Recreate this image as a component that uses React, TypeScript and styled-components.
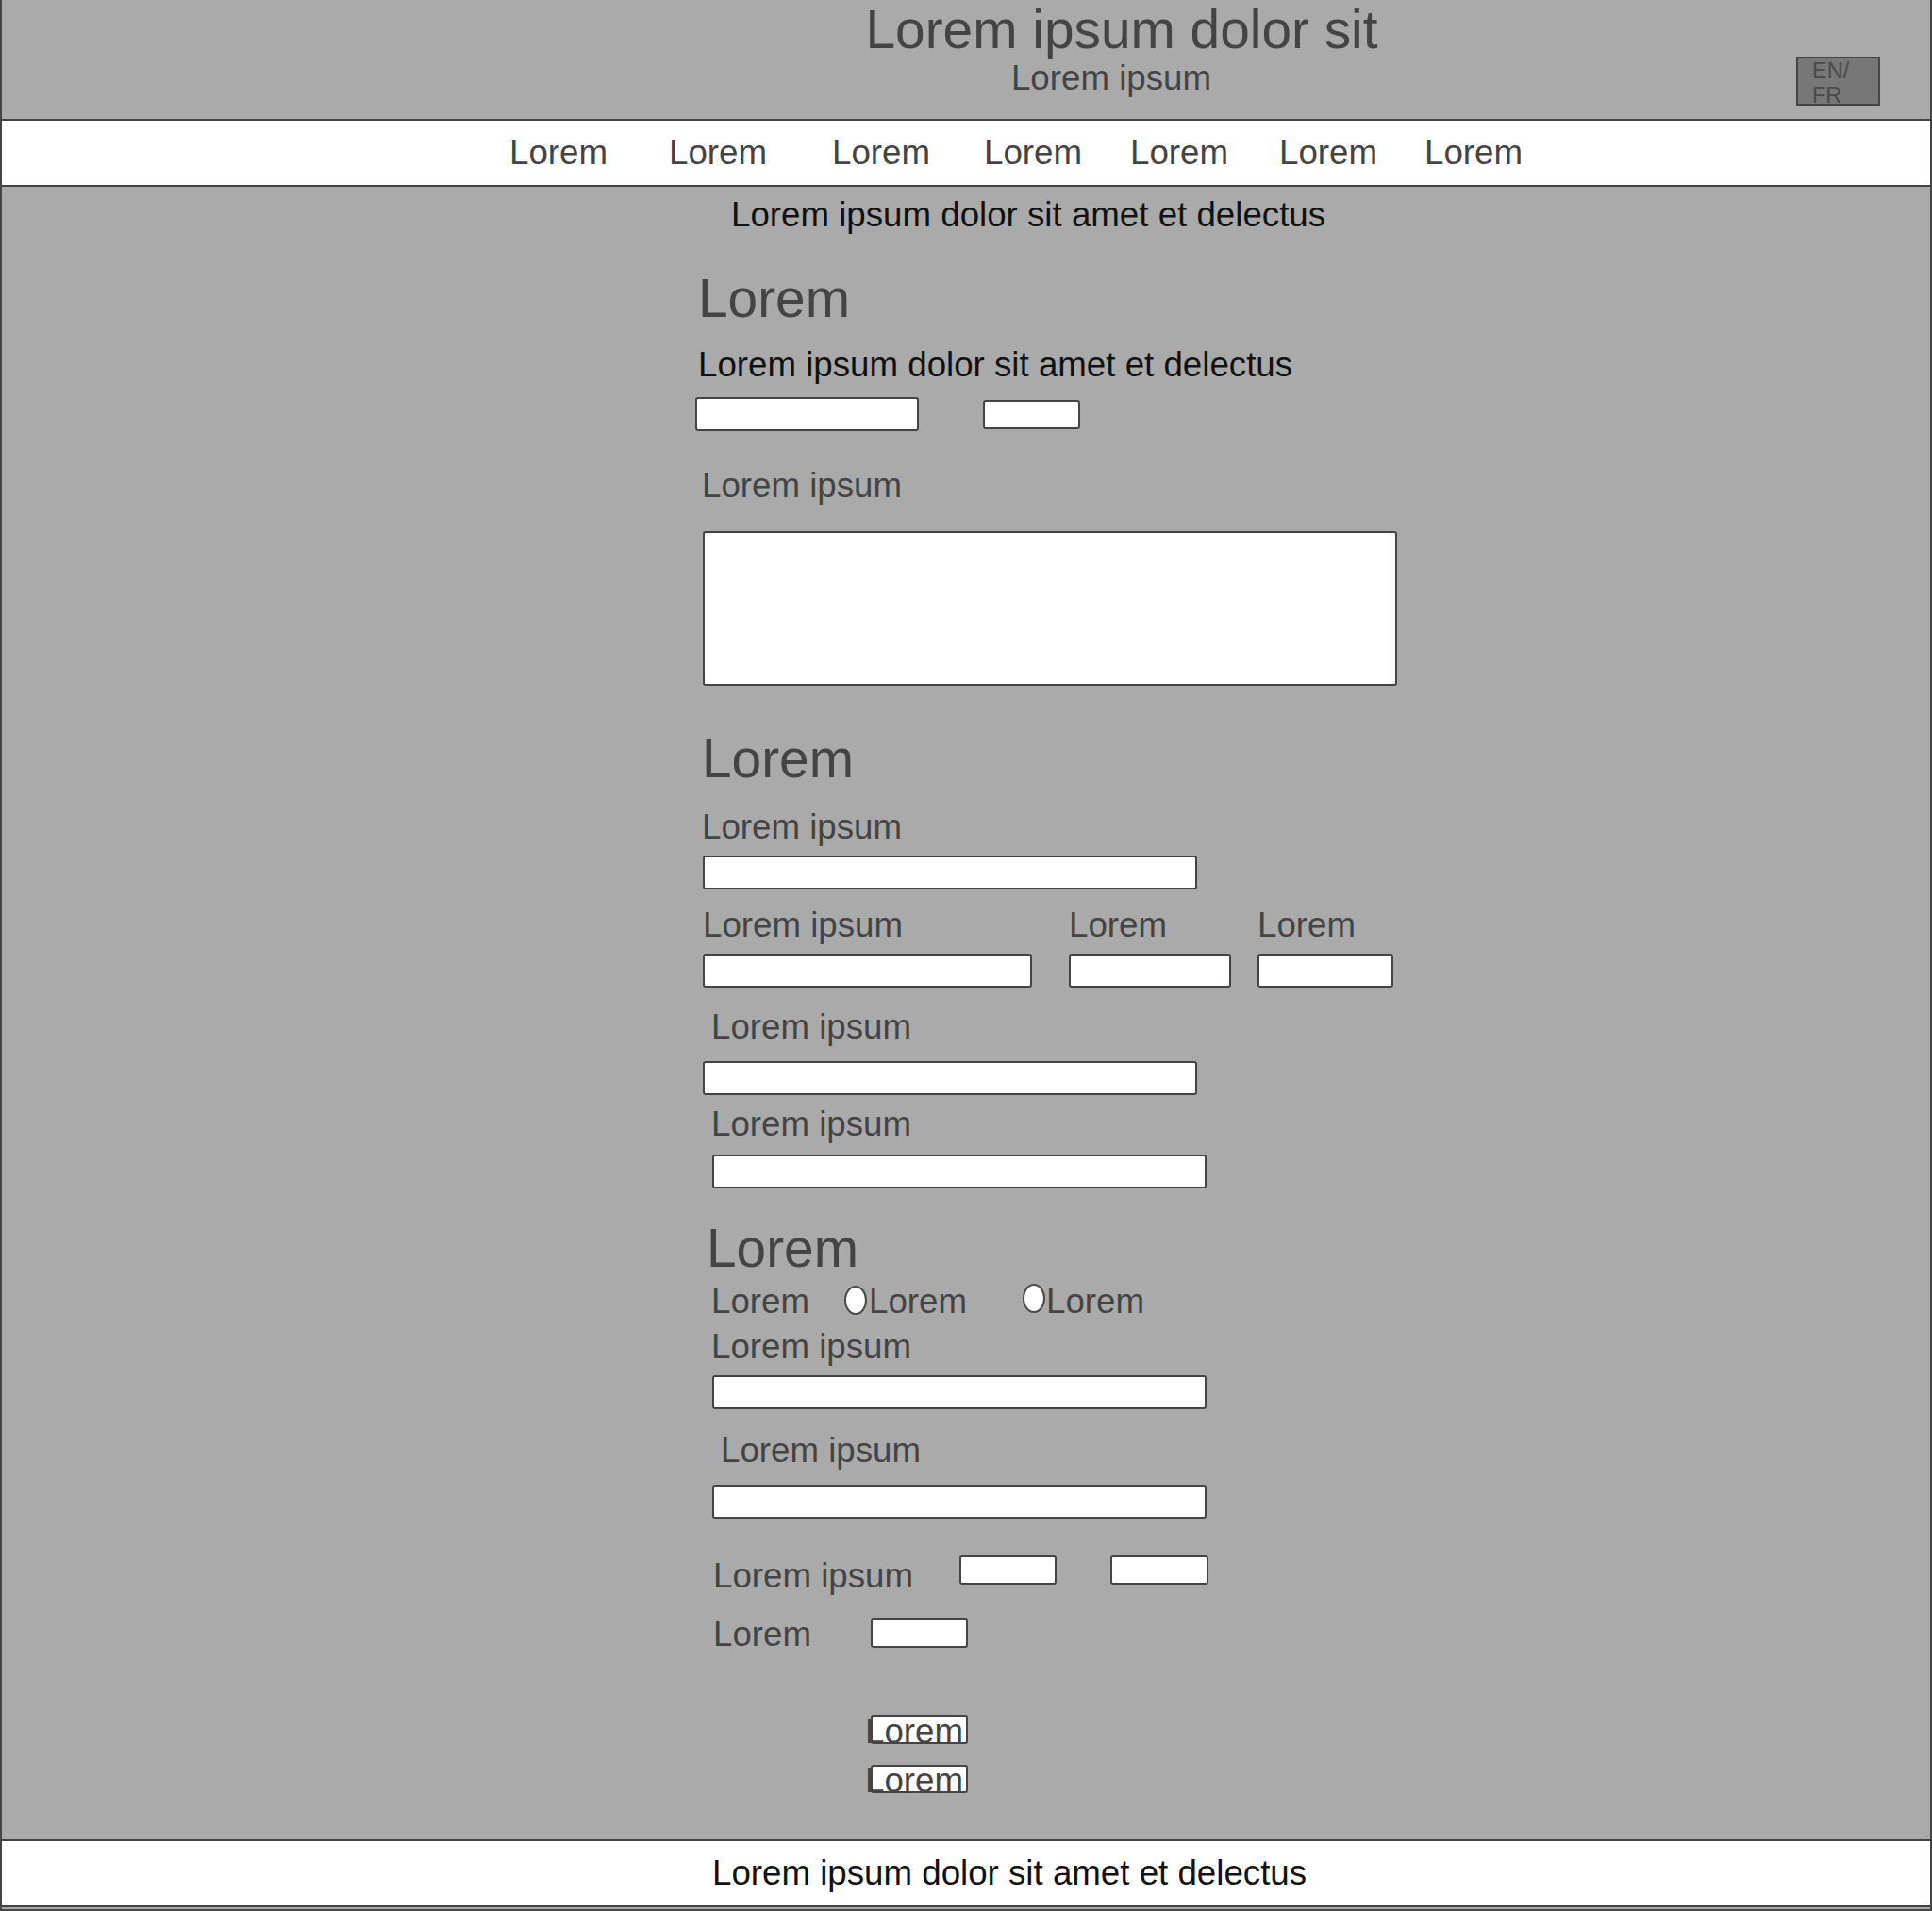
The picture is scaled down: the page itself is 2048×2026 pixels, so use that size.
import React from 'react';
import styled, { createGlobalStyle } from 'styled-components';

const GlobalStyle = createGlobalStyle`
  html, body {
    margin: 0;
    padding: 0;
    background: #aaaaaa;
  }

  body {
    font-family: 'Liberation Sans', Arial, sans-serif;
    color: #444;
  }

  * {
    box-sizing: border-box;
  }
`;

// body copy in the wireframe runs a touch over 36px
const TEXT = '36.7px';
const BIG = '56.8px';

const Page = styled.div`
  width: 2048px;
  border-left: 2px solid #444;
  border-right: 2px solid #444;
  background: #aaaaaa;
`;

const Header = styled.header`
  display: flex;
  align-items: flex-start;
  height: 128px;
  padding-left: 472px;
  border-bottom: 2px solid #444;
`;

const TitleBlock = styled.div`
  flex: 1;
  display: flex;
  flex-direction: column;
  align-items: center;
`;

const Title = styled.h1`
  margin: 0;
  font-size: ${BIG};
  line-height: 63px;
  font-weight: 400;
  color: #444;
  white-space: nowrap;
`;

const Subtitle = styled.div`
  padding-right: 22px;
  font-size: ${TEXT};
  line-height: 40px;
  color: #444;
`;

const LangToggle = styled.button`
  width: 89px;
  height: 52px;
  margin: 60px 53px 0 0;
  padding: 0 0 0 15px;
  border: 2px solid #444;
  background: #777;
  color: #4a4a4a;
  font-family: inherit;
  font-size: 23.5px;
  line-height: 26px;
  text-align: left;
  overflow: hidden;
  display: block;
`;

const Nav = styled.nav`
  display: flex;
  align-items: flex-start;
  height: 70px;
  padding: 14px 0 0 0;
  background: #fff;
  border-bottom: 2px solid #444;
`;

const NavItem = styled.a<{ $ml: number }>`
  margin-left: ${({ $ml }) => $ml}px;
  font-size: ${TEXT};
  line-height: 40px;
  color: #444;
  text-decoration: none;
  white-space: nowrap;
`;

const Main = styled.main`
  display: flex;
  flex-direction: column;
  align-items: flex-start;
  padding: 10px 0 49px 737px;
`;

const Intro = styled.p<{ $ml: number }>`
  margin: 0 0 0 ${({ $ml }) => $ml}px;
  font-size: ${TEXT};
  line-height: 40px;
  color: #111;
  white-space: nowrap;
`;

const SectionTitle = styled.h2<{ $mt: number; $ml: number }>`
  margin: ${({ $mt }) => $mt}px 0 0 ${({ $ml }) => $ml}px;
  font-size: ${BIG};
  line-height: 64px;
  font-weight: 400;
  color: #444;
`;

const Lead = styled.p<{ $mt: number; $ml: number }>`
  margin: ${({ $mt }) => $mt}px 0 0 ${({ $ml }) => $ml}px;
  font-size: ${TEXT};
  line-height: 40px;
  color: #111;
  white-space: nowrap;
`;

const Label = styled.label<{ $mt?: number; $ml?: number }>`
  display: block;
  margin: ${({ $mt = 0 }) => $mt}px 0 0 ${({ $ml = 0 }) => $ml}px;
  font-size: ${TEXT};
  line-height: 40px;
  color: #444;
  white-space: nowrap;
`;

const Field = styled.input<{ $mt?: number; $ml?: number; $w: number; $h?: number }>`
  display: block;
  flex: none;
  width: ${({ $w }) => $w}px;
  height: ${({ $h = 36 }) => $h}px;
  margin: ${({ $mt = 0 }) => $mt}px 0 0 ${({ $ml = 0 }) => $ml}px;
  padding: 0;
  border: 2px solid #444;
  border-radius: 3px;
  background: #fff;
  outline: none;
`;

const TextBox = styled.textarea<{ $mt: number; $ml: number }>`
  display: block;
  width: 736px;
  height: 164px;
  margin: ${({ $mt }) => $mt}px 0 0 ${({ $ml }) => $ml}px;
  padding: 0;
  border: 2px solid #444;
  border-radius: 3px;
  background: #fff;
  resize: none;
  outline: none;
`;

const Row = styled.div<{ $mt: number; $ml: number; $align?: string }>`
  display: flex;
  align-items: ${({ $align = 'flex-start' }) => $align};
  margin: ${({ $mt }) => $mt}px 0 0 ${({ $ml }) => $ml}px;
`;

const Column = styled.div<{ $ml?: number }>`
  display: flex;
  flex-direction: column;
  margin-left: ${({ $ml = 0 }) => $ml}px;
`;

const Radio = styled.span<{ $mt: number; $ml: number }>`
  display: block;
  flex: none;
  width: 24px;
  height: 31px;
  margin: ${({ $mt }) => $mt}px 0 0 ${({ $ml }) => $ml}px;
  border: 2px solid #4a4a4a;
  border-radius: 50%;
  background: #fff;
`;

const Button = styled.button<{ $mt: number; $h: number }>`
  display: block;
  width: 103px;
  height: ${({ $h }) => $h}px;
  margin: ${({ $mt }) => $mt}px 0 0 184px;
  padding: 0;
  border: 2px solid #444;
  border-radius: 3px;
  background: #fff;
  color: #444;
  font-family: inherit;
  font-size: ${TEXT};
  line-height: ${({ $h }) => $h}px;
  text-align: left;
  text-indent: -8px;
  white-space: nowrap;
  overflow: visible;
`;

const Footer = styled.footer`
  height: 72px;
  padding: 14px 0 0 753px;
  background: #fff;
  border-top: 2px solid #444;
  border-bottom: 2px solid #444;
  font-size: ${TEXT};
  line-height: 40px;
  color: #111;
`;

const FooterEdge = styled.div`
  height: 4px;
  border-bottom: 2px solid #444;
`;

const navItems = [
  { label: 'Lorem', ml: 538 },
  { label: 'Lorem', ml: 65 },
  { label: 'Lorem', ml: 69 },
  { label: 'Lorem', ml: 57 },
  { label: 'Lorem', ml: 51 },
  { label: 'Lorem', ml: 54 },
  { label: 'Lorem', ml: 50 },
];

export default function App() {
  return (
    <>
      <GlobalStyle />
      <Page>
        <Header>
          <TitleBlock>
            <Title>Lorem ipsum dolor sit</Title>
            <Subtitle>Lorem ipsum</Subtitle>
          </TitleBlock>
          <LangToggle>
            EN/
            <br />
            FR
          </LangToggle>
        </Header>

        <Nav>
          {navItems.map((item, i) => (
            <NavItem key={i} $ml={item.ml} href="#">
              {item.label}
            </NavItem>
          ))}
        </Nav>

        <Main>
          <Intro $ml={36}>Lorem ipsum dolor sit amet et delectus</Intro>

          <SectionTitle $mt={37} $ml={1}>Lorem</SectionTitle>
          <Lead $mt={18} $ml={1}>Lorem ipsum dolor sit amet et delectus</Lead>
          <Row $mt={14} $ml={-2} $align="center">
            <Field $w={237} $h={36} />
            <Field $w={103} $h={31} $ml={68} />
          </Row>
          <Label $mt={38} $ml={5}>Lorem ipsum</Label>
          <TextBox $mt={28} $ml={6} />

          <SectionTitle $mt={46} $ml={5}>Lorem</SectionTitle>
          <Label $mt={20} $ml={5}>Lorem ipsum</Label>
          <Field $mt={10} $ml={6} $w={524} />
          <Row $mt={18} $ml={6}>
            <Column>
              <Label>Lorem ipsum</Label>
              <Field $mt={10} $w={349} />
            </Column>
            <Column $ml={39}>
              <Label>Lorem</Label>
              <Field $mt={10} $w={172} />
            </Column>
            <Column $ml={28}>
              <Label>Lorem</Label>
              <Field $mt={10} $w={144} />
            </Column>
          </Row>
          <Label $mt={22} $ml={15}>Lorem ipsum</Label>
          <Field $mt={16} $ml={6} $w={524} />
          <Label $mt={11} $ml={15}>Lorem ipsum</Label>
          <Field $mt={12} $ml={16} $w={524} />

          <SectionTitle $mt={32} $ml={10}>Lorem</SectionTitle>
          <Row $mt={4} $ml={15}>
            <Label>Lorem</Label>
            <Radio $mt={3} $ml={37} />
            <Label $ml={2}>Lorem</Label>
            <Radio $mt={1} $ml={59} />
            <Label $ml={1}>Lorem</Label>
          </Row>
          <Label $mt={8} $ml={15}>Lorem ipsum</Label>
          <Field $mt={10} $ml={16} $w={524} />
          <Label $mt={24} $ml={25}>Lorem ipsum</Label>
          <Field $mt={16} $ml={16} $w={524} />

          <Row $mt={39} $ml={17}>
            <Label $mt={2}>Lorem ipsum</Label>
            <Field $ml={49} $w={103} $h={31} />
            <Field $ml={57} $w={104} $h={31} />
          </Row>
          <Row $mt={22} $ml={17}>
            <Label>Lorem</Label>
            <Field $mt={2} $ml={63} $w={103} $h={32} />
          </Row>

          <Button $mt={65} $h={31}>Lorem</Button>
          <Button $mt={22} $h={30}>Lorem</Button>
        </Main>

        <Footer>Lorem ipsum dolor sit amet et delectus</Footer>
        <FooterEdge />
      </Page>
    </>
  );
}
